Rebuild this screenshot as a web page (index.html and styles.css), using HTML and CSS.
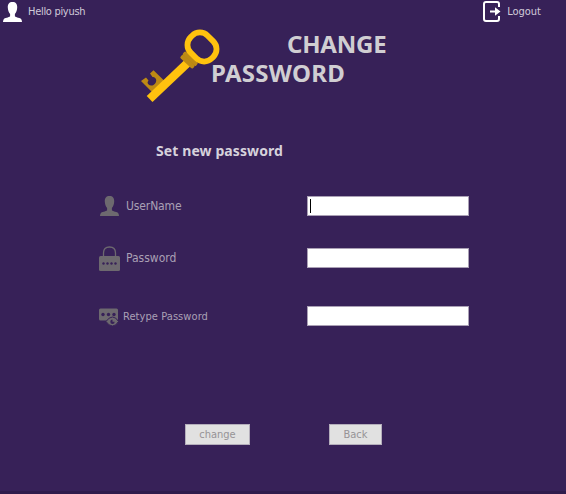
FILE: index.html
```
<!DOCTYPE html>
<html lang="en">
<head>
<meta charset="utf-8">
<title>Change Password</title>
<link rel="stylesheet" href="styles.css">
</head>
<body>
<main class="window">
  <header class="topbar">
    <div class="greeting">
      <svg class="icon-user" width="19" height="20" viewBox="0 0 19 20"><path d="M9.500 0C6.200 0 4.700 2 4.800 5.500C4.900 8.500 5.800 10.600 7.100 12V14.300C6 15.800 1.500 15.500 .6 17.500Q0 18.800 0 20H19Q19 18.800 18.400 17.500C17.500 15.500 13 15.800 11.900 14.300V12C13.200 10.600 14.100 8.500 14.200 5.500C14.300 2 12.800 0 9.500 0Z"/></svg>
      <span class="hello">Hello piyush</span>
    </div>
    <a class="logout">
      <svg width="18" height="21" viewBox="0 0 18 21"><path class="door" d="M16 6V3Q16 1 14 1H3Q1 1 1 3V18Q1 20 3 20H14Q16 20 16 18V15"/><path class="arrow" d="M7 9.500H12V6.200L17.500 10.500L12 14.800V11.500H7Z"/></svg>
      <span class="logout-label">Logout</span>
    </a>
  </header>

  <section class="banner">
    <svg class="key" width="79" height="74" viewBox="0 0 79 74">
      <path class="key-dark" d="M0 52L5 48.500L7.500 51.500Q5.800 53 7 55Q9.500 57.500 12.500 56Q16 53.500 15 50Q13.500 47.500 11.500 48L9 44.500L12.500 41.300L23 51.500L11 63Z"/>
      <path class="key-gold" d="M43.500 31L49.500 37L11.500 73L5.700 67Z"/>
      <rect class="key-dark" x="39" y="27" width="18" height="4.500" rx="1.500" transform="rotate(43 48 31)"/>
      <rect class="key-dark" x="39.500" y="31" width="17" height="4.500" rx="1.500" transform="rotate(43 48 31)"/>
      <rect class="key-ring" x="46" y="6" width="30" height="24" rx="11" transform="rotate(45 61 18)"/>
    </svg>
    <h1 class="title"><span class="title-first">CHANGE</span><span class="title-second">PASSWORD</span></h1>
  </section>

  <h2 class="subtitle"><span>Set new password</span></h2>

  <form class="fields">
    <div class="field">
      <label class="caption" for="user">
        <svg class="icon-field" width="21" height="20" viewBox="-1 0 21 20"><path d="M9.500 0C6.200 0 4.700 2 4.800 5.500C4.900 8.500 5.800 10.600 7.100 12V14.300C6 15.800 1.500 15.500 .6 17.500Q0 18.800 0 20H19Q19 18.800 18.400 17.500C17.500 15.500 13 15.800 11.900 14.300V12C13.200 10.600 14.100 8.500 14.200 5.500C14.300 2 12.800 0 9.500 0Z"/></svg>
        <span class="username">UserName</span>
      </label>
      <div class="box"><input id="user" type="text"><i class="caret"></i></div>
    </div>
    <div class="field">
      <label class="caption" for="pass">
        <svg class="icon-field icon-lock" width="21" height="25" viewBox="0 0 21 25"><path class="shackle" d="M4.500 10V7Q4.500 1 10.500 1Q16.500 1 16.500 7V10"/><rect y="10" width="21" height="15" rx="1.500"/><g class="hole"><circle cx="4.500" cy="17.500" r="1.200"/><circle cx="8.500" cy="17.500" r="1.200"/><circle cx="12.500" cy="17.500" r="1.200"/><circle cx="16.500" cy="17.500" r="1.200"/></g></svg>
        <span class="password">Password</span>
      </label>
      <div class="box"><input id="pass" type="password"></div>
    </div>
    <div class="field">
      <label class="caption retype-caption" for="retype">
        <svg class="icon-field icon-retype" width="20" height="18" viewBox="0 0 20 18"><rect y="0.500" width="19" height="12" rx="1.500"/><g class="hole"><circle cx="4" cy="6.500" r="1.700"/><circle cx="9.500" cy="6.500" r="1.700"/><circle cx="15" cy="6.500" r="1.700"/></g><path class="eye" d="M7 13.500Q10 9 13.500 9Q17 9 19.500 13.500Q17 18 13.500 18Q10 18 7 13.500Z"/><path class="hole" d="M13.500 11.500A2.200 2.200 0 1 0 15.700 13.700H13.500Z"/></svg>
        <span class="retype">Retype Password</span>
      </label>
      <div class="box"><input id="retype" type="password"></div>
    </div>
  </form>

  <footer class="actions">
    <button class="button change" type="button"><span>change</span></button>
    <button class="button back" type="button"><span>Back</span></button>
  </footer>
</main>
</body>
</html>
```

FILE: styles.css
```
* { box-sizing: border-box; }
body { margin: 0; background: #372158; font-family: "DejaVu Sans Condensed", "DejaVu Sans", sans-serif; }
.window { width: 566px; height: 494px; overflow: hidden; display: flex; flex-direction: column; border-bottom: 3px solid #2f1c4c; }
svg { display: block; flex: none; }
span { white-space: nowrap; }
.topbar { height: 23px; display: flex; justify-content: space-between; padding: 1px 25px 0 3px; }
.greeting, .logout { display: flex; height: 21px; align-items: center; font-size: 11px; color: #d0cad8; }
.greeting { gap: 6px; }
.hello { letter-spacing: -0.3px; }
.logout { gap: 6px; }
.icon-user { fill: #fff; }
.door { fill: none; stroke: #fff; stroke-width: 2; }
.arrow { fill: #fff; }
.banner { height: 87px; display: flex; padding: 6px 0 0 141px; }
.key-gold { fill: #ffc20e; }
.key-dark { fill: #bd8a14; }
.key-ring { fill: none; stroke: #ffc20e; stroke-width: 5.8; }
.title { margin: 0 0 0 -9px; display: flex; flex-direction: column; font: bold 24px/29px "Noto Sans", sans-serif; color: #d0ced2; }
.title-first { padding-left: 76px; letter-spacing: -0.2px; }
.title-second { letter-spacing: 0.25px; }
.subtitle { height: 24px; margin: 29px 0 0 156px; font: bold 14px/24px "Noto Sans", sans-serif; color: #d6d2dc; letter-spacing: 0.1px; }
.fields { display: flex; flex-direction: column; padding-left: 99px; margin-top: 30px; }
.field { height: 26px; display: flex; align-items: center; }
.field + .field { margin-top: 26px; }
.field:last-child { margin-top: 32px; }
.caption { width: 208px; display: flex; align-items: center; gap: 6px; font-size: 12px; color: #aaa0b5; }
.username { letter-spacing: -0.12px; }
.retype-caption { gap: 4px; font-size: 11px; letter-spacing: 0.07px; }
.icon-field { fill: #6d696f; }
.icon-retype { margin-top: 2px; }
.shackle { fill: none; stroke: #6d696f; stroke-width: 1.3; }
.hole { fill: #372158; }
.eye { stroke: #372158; stroke-width: 1; }
.box { position: relative; width: 162px; height: 20px; }
input { display: block; width: 162px; height: 20px; border: 1px solid #aaa0b5; background: #fff; padding: 0 3px; outline: 0; border-radius: 0; }
.caret { position: absolute; left: 3px; top: 3px; width: 1px; height: 14px; background: #000; }
.actions { display: flex; gap: 79px; margin: 95px 0 0 185px; }
.button { height: 21px; border: 1px solid #b4aebb; background: #e1e1e1; color: #969396; padding: 0; font: 11px/17px "DejaVu Sans Condensed", sans-serif; }
.change { width: 65px; }
.back { width: 53px; }
```
